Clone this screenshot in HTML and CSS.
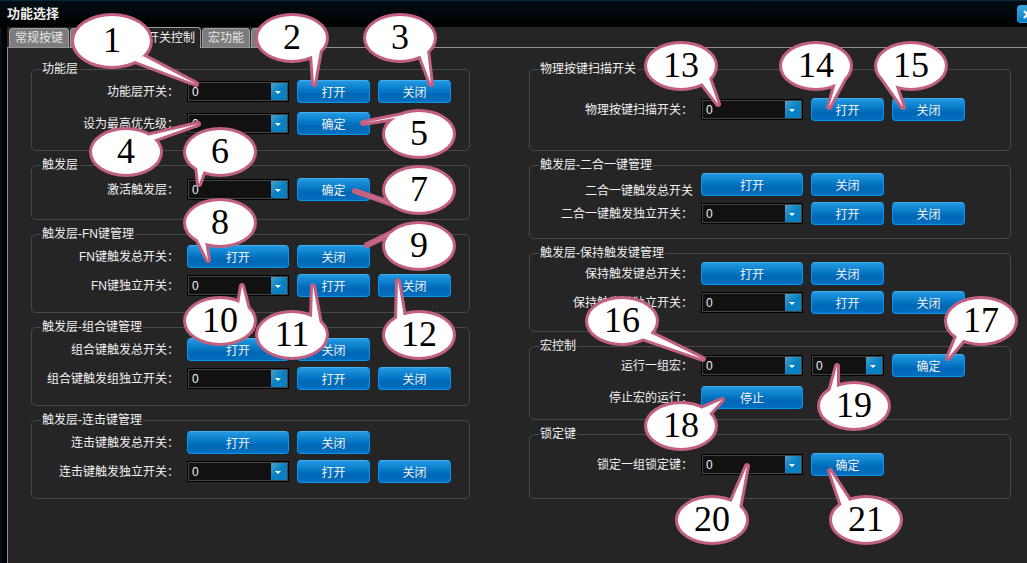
FILE: index.html
```
<!DOCTYPE html>
<html lang="zh-CN">
<head>
<meta charset="utf-8">
<title>功能选择</title>
<link rel="stylesheet" href="styles.css">
</head>
<body>
<div class="window">
  <header class="titlebar">
    <h1 class="title">功能选择</h1>
    <button class="close" type="button" aria-label="关闭窗口"><svg width="9" height="9" viewBox="0 0 9 9"><path d="M1 1L8 8M8 1L1 8" stroke="#fff" stroke-width="2"/></svg></button>
  </header>
  <nav class="tabs">
    <button class="tab" type="button">常规按键</button>
    <button class="tab tab-blank" type="button" aria-label="按键"></button>
    <button class="tab tab-active" type="button">开关控制</button>
    <button class="tab" type="button">宏功能</button>
    <button class="tab" type="button">灯</button>
  </nav>
  <main class="page">
    <div class="column">
      <fieldset class="group loose">
        <legend>功能层</legend>
        <div class="row"><label for="s1">功能层开关：</label><span class="combo"><select id="s1"><option>0</option></select></span><button class="btn" type="button">打开</button><button class="btn" type="button">关闭</button></div>
        <div class="row"><label for="s2">设为最高优先级：</label><span class="combo"><select id="s2"><option>0</option></select></span><button class="btn" type="button">确定</button></div>
      </fieldset>
      <fieldset class="group single">
        <legend>触发层</legend>
        <div class="row"><label for="s3">激活触发层：</label><span class="combo"><select id="s3"><option>0</option></select></span><button class="btn" type="button">确定</button></div>
      </fieldset>
      <fieldset class="group">
        <legend>触发层-FN键管理</legend>
        <div class="row"><label for="b1">FN键触发总开关：</label><button class="btn wide" id="b1" type="button">打开</button><button class="btn" type="button">关闭</button></div>
        <div class="row"><label for="s4">FN键独立开关：</label><span class="combo"><select id="s4"><option>0</option></select></span><button class="btn" type="button">打开</button><button class="btn" type="button">关闭</button></div>
      </fieldset>
      <fieldset class="group">
        <legend>触发层-组合键管理</legend>
        <div class="row"><label for="b2">组合键触发总开关：</label><button class="btn wide" id="b2" type="button">打开</button><button class="btn" type="button">关闭</button></div>
        <div class="row"><label for="s5">组合键触发组独立开关：</label><span class="combo"><select id="s5"><option>0</option></select></span><button class="btn" type="button">打开</button><button class="btn" type="button">关闭</button></div>
      </fieldset>
      <fieldset class="group">
        <legend>触发层-连击键管理</legend>
        <div class="row"><label for="b3">连击键触发总开关：</label><button class="btn wide" id="b3" type="button">打开</button><button class="btn" type="button">关闭</button></div>
        <div class="row"><label for="s6">连击键触发独立开关：</label><span class="combo"><select id="s6"><option>0</option></select></span><button class="btn" type="button">打开</button><button class="btn" type="button">关闭</button></div>
      </fieldset>
    </div>
    <div class="column column-right">
      <fieldset class="group scan">
        <legend>物理按键扫描开关</legend>
        <div class="row"><label for="s7">物理按键扫描开关：</label><span class="combo"><select id="s7"><option>0</option></select></span><button class="btn" type="button">打开</button><button class="btn" type="button">关闭</button></div>
      </fieldset>
      <fieldset class="group combined">
        <legend>触发层-二合一键管理</legend>
        <div class="row row-low"><label for="b4">二合一键触发总开关</label><button class="btn wide" id="b4" type="button">打开</button><button class="btn" type="button">关闭</button></div>
        <div class="row"><label for="s8">二合一键触发独立开关：</label><span class="combo"><select id="s8"><option>0</option></select></span><button class="btn" type="button">打开</button><button class="btn" type="button">关闭</button></div>
      </fieldset>
      <fieldset class="group hold">
        <legend>触发层-保持触发键管理</legend>
        <div class="row"><label for="b5">保持触发键总开关：</label><button class="btn wide" id="b5" type="button">打开</button><button class="btn" type="button">关闭</button></div>
        <div class="row"><label for="s9">保持触发键独立开关：</label><span class="combo"><select id="s9"><option>0</option></select></span><button class="btn" type="button">打开</button><button class="btn" type="button">关闭</button></div>
      </fieldset>
      <fieldset class="group loose macro">
        <legend>宏控制</legend>
        <div class="row"><label for="s10">运行一组宏：</label><span class="combo"><select id="s10"><option>0</option></select></span><span class="combo narrow"><select aria-label="运行次数"><option>0</option></select></span><button class="btn" type="button">确定</button></div>
        <div class="row"><label for="b6">停止宏的运行：</label><button class="btn wide" id="b6" type="button">停止</button></div>
      </fieldset>
      <fieldset class="group lock">
        <legend>锁定键</legend>
        <div class="row"><label for="s11">锁定一组锁定键：</label><span class="combo"><select id="s11"><option>0</option></select></span><button class="btn" type="button">确定</button></div>
      </fieldset>
    </div>
  </main>
  <svg class="callouts" width="1027" height="563" viewBox="0 0 1027 563">
    <g transform="translate(112 41)"><path d="M-38 0A38 25 0 1 1 38 0A38 25 0 1 1-38 0ZM31 15L84 43L23 20Z"/><text y="11">1</text></g>
    <g transform="translate(292 38)"><path d="M-34 0A34 22 0 1 1 34 0A34 22 0 1 1-34 0ZM28 12L22 46L20 17Z"/><text y="11">2</text></g>
    <g transform="translate(400 38)"><path d="M-34 0A34 22 0 1 1 34 0A34 22 0 1 1-34 0ZM27 12L31 46L20 17Z"/><text y="11">3</text></g>
    <g transform="translate(126 152)"><path d="M-34 0A34 22 0 1 1 34 0A34 22 0 1 1-34 0ZM21 -16L72 -28L27 -12Z"/><text y="11">4</text></g>
    <g transform="translate(419 134)"><path d="M-34 0A34 22 0 1 1 34 0A34 22 0 1 1-34 0ZM-24 -16L-56 -11L-16 -19Z"/><text y="11">5</text></g>
    <g transform="translate(220 152)"><path d="M-34 0A34 22 0 1 1 34 0A34 22 0 1 1-34 0ZM-16 18L-21 32L-23 15Z"/><text y="11">6</text></g>
    <g transform="translate(419 190)"><path d="M-34 0A34 22 0 1 1 34 0A34 22 0 1 1-34 0ZM-18 17L-64 1L-23 15Z"/><text y="11">7</text></g>
    <g transform="translate(220 223)"><path d="M-34 0A34 22 0 1 1 34 0A34 22 0 1 1-34 0ZM-15 18L-12 37L-23 15Z"/><text y="11">8</text></g>
    <g transform="translate(419 246)"><path d="M-34 0A34 22 0 1 1 34 0A34 22 0 1 1-34 0ZM-18 -17L-52 -1L-23 -15Z"/><text y="11">9</text></g>
    <g transform="translate(220 321)"><path d="M-34 0A34 22 0 1 1 34 0A34 22 0 1 1-34 0ZM19 -17L22 -35L28 -12Z"/><text y="11">10</text></g>
    <g transform="translate(292 335)"><path d="M-34 0A34 22 0 1 1 34 0A34 22 0 1 1-34 0ZM20 -17L21 -49L28 -11Z"/><text y="11">11</text></g>
    <g transform="translate(419 335)"><path d="M-34 0A34 22 0 1 1 34 0A34 22 0 1 1-34 0ZM-22 -16L-21 -54L-15 -18Z"/><text y="11">12</text></g>
    <g transform="translate(681 66)"><path d="M-34 0A34 22 0 1 1 34 0A34 22 0 1 1-34 0ZM28 12L37 38L21 17Z"/><text y="11">13</text></g>
    <g transform="translate(816 66)"><path d="M-34 0A34 22 0 1 1 34 0A34 22 0 1 1-34 0ZM30 9L13 41L20 17Z"/><text y="11">14</text></g>
    <g transform="translate(911 66)"><path d="M-34 0A34 22 0 1 1 34 0A34 22 0 1 1-34 0ZM-16 18L-8 41L-30 10Z"/><text y="11">15</text></g>
    <g transform="translate(622 321)"><path d="M-34 0A34 22 0 1 1 34 0A34 22 0 1 1-34 0ZM28 12L81 38L20 17Z"/><text y="11">16</text></g>
    <g transform="translate(981 321)"><path d="M-34 0A34 22 0 1 1 34 0A34 22 0 1 1-34 0ZM-17 18L-33 37L-24 15Z"/><text y="11">17</text></g>
    <g transform="translate(681 426)"><path d="M-34 0A34 22 0 1 1 34 0A34 22 0 1 1-34 0ZM20 -17L41 -26L28 -12Z"/><text y="11">18</text></g>
    <g transform="translate(854 406)"><path d="M-34 0A34 22 0 1 1 34 0A34 22 0 1 1-34 0ZM-24 -14L-17 -40L-17 -18Z"/><text y="11">19</text></g>
    <g transform="translate(712 520)"><path d="M-34 0A34 22 0 1 1 34 0A34 22 0 1 1-34 0ZM19 -17L35 -54L27 -11Z"/><text y="11">20</text></g>
    <g transform="translate(866 520)"><path d="M-34 0A34 22 0 1 1 34 0A34 22 0 1 1-34 0ZM-24 -14L-36 -49L-16 -18Z"/><text y="11">21</text></g>
  </svg>
</div>
</body>
</html>
```
FILE: styles.css
```
* {
  box-sizing: border-box;
}

body {
  margin: 0;
  background: #252525;
  color: #f0f0f0;
  font: 12px/14px "Liberation Sans", "Noto Sans CJK SC", sans-serif;
}

button,
select {
  font: inherit;
  color: inherit;
}

.window {
  position: relative;
  display: flex;
  flex-direction: column;
  min-height: 100vh;
  overflow: hidden;
  padding-left: 7px;
  background: linear-gradient(90deg, #04141f 0, #04141f 1px, #000408 2px, #000 7px, #252525 7px);
}

.titlebar {
  display: flex;
  align-items: center;
  justify-content: space-between;
  height: 27px;
  margin-left: -7px;
  padding-left: 7px;
  border-top: 1px solid #04283c;
  background: linear-gradient(#020d15, #000);
}

.title {
  margin: 0;
  font-size: 13px;
  line-height: 16px;
}

.close {
  display: flex;
  align-items: center;
  justify-content: center;
  width: 20px;
  height: 18px;
  margin-right: -10px;
  padding: 0;
  border: 1px solid #2a9fe0;
  border-radius: 3px;
  background: linear-gradient(#3ba7de, #0b7cc4);
}

.tabs {
  display: flex;
  align-items: flex-end;
  gap: 1px;
  height: 21px;
  padding-left: 2px;
  border-bottom: 1px solid #909090;
}

.tab {
  height: 19px;
  padding: 0 5px;
  border: 1px solid #a0a0a0;
  border-bottom: 0;
  border-radius: 4px 4px 0 0;
  background: #7c7c7c;
  color: #e4e4e4;
  line-height: 18px;
}

.tab-blank {
  width: 70px;
}

.tab-active {
  height: 21px;
  margin-bottom: -1px;
  background: #252525;
  color: #f0f0f0;
}

.page {
  flex: 1;
  display: grid;
  grid-template-columns: 439fr 482fr;
  gap: 59px;
  padding: 14px 16px 16px 23px;
  border-left: 1px solid #909090;
}

.column {
  --label: 147px;
  display: flex;
  flex-direction: column;
  gap: 7px;
}

.column-right {
  --label: 163px;
}

.group {
  display: flex;
  flex-direction: column;
  gap: 6px;
  min-width: 0;
  margin: 0;
  padding: 4px 0 15px;
  border: 1px solid #484848;
  border-radius: 5px;
}

.group legend {
  margin-left: 9px;
  padding: 0 1px;
}

.loose {
  gap: 9px;
}

.single {
  padding: 6px 0 18px;
}

.scan {
  padding: 22px 0 29px;
}

.combined {
  padding: 1px 0 13px;
}

.hold {
  padding: 2px 0 17px;
}

.macro {
  padding: 1px 0 10px;
}

.lock {
  padding: 12px 0 22px;
}

.row {
  display: flex;
  align-items: center;
  gap: 8px;
  height: 23px;
}

.row label {
  width: var(--label);
  text-align: right;
  white-space: nowrap;
}

.row-low label {
  align-self: flex-end;
  line-height: 10px;
}

.combo {
  position: relative;
  width: 102px;
  height: 21px;
  border: 1px solid #000;
}

.narrow {
  width: 73px;
}

.combo select {
  display: block;
  width: 100%;
  height: 100%;
  padding: 0 20px 0 3px;
  border: 1px solid #444;
  border-radius: 0;
  background: linear-gradient(135deg, #4ba3c9, #0880c4 50%, #087fc0) right / 16px 100% no-repeat #111;
  appearance: none;
}

.combo::after {
  content: "";
  position: absolute;
  right: 7px;
  top: 9px;
  border: 3px solid transparent;
  border-top-color: #fff;
  border-bottom: 0;
  pointer-events: none;
}

.btn {
  width: 73px;
  height: 23px;
  padding: 2px 0 0;
  border: 1px solid #0a94f0;
  border-top-color: #42b0ee;
  border-radius: 4px;
  background: linear-gradient(#2299e2, #087bc8 40%, #0067b4 65%, #0070c0);
}

.wide {
  width: 102px;
}

.callouts {
  position: absolute;
  left: 0;
  top: 0;
  pointer-events: none;
}

.callouts path {
  fill: #fff;
  stroke: #c16081;
  stroke-width: 6px;
  stroke-linejoin: round;
  paint-order: stroke;
}

.callouts text {
  fill: #000;
  font-family: "Liberation Serif", serif;
  font-size: 36px;
  text-anchor: middle;
}
```
